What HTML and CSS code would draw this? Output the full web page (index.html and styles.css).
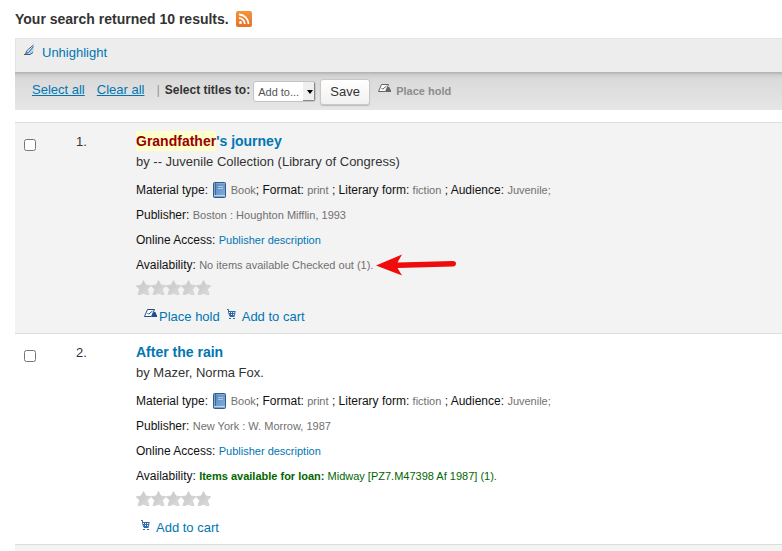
FILE: index.html
```html
<!DOCTYPE html>
<html lang="en">
<head>
<meta charset="utf-8">
<title>Search results</title>
<link rel="stylesheet" href="styles.css">
</head>
<body>
<svg class="defs" aria-hidden="true">
  <defs>
    <linearGradient id="bookFill" x1="0" y1="0" x2="1" y2="1"><stop offset="0" stop-color="#5585b8"/><stop offset="1" stop-color="#86b0da"/></linearGradient>
    <linearGradient id="starFill" x1="0" y1="0" x2="1" y2="1"><stop offset="0" stop-color="#c8c8c8"/><stop offset=".5" stop-color="#cfcfcf"/><stop offset="1" stop-color="#dedede"/></linearGradient>
    <linearGradient id="rssFill" x1="0" y1="0" x2="0" y2="1"><stop offset="0" stop-color="#f5943c"/><stop offset="1" stop-color="#e5702a"/></linearGradient>
    <symbol id="book" viewBox="0 0 13 16">
      <rect x=".5" y=".5" width="12" height="15" rx="1" fill="url(#bookFill)" stroke="#2f5b8d"/>
      <path d="M2.5 1v12" stroke="#3c6a9e"/><path d="M1.5 1v12M3.5 1.5h8" stroke="#8db4dc" opacity=".7"/>
      <path d="M5 4.5h5M5 6.5h5" stroke="#a9c9e8"/><path d="M1 13.5h11" stroke="#c3d6e9"/>
    </symbol>
    <symbol id="star" viewBox="0 0 15 15">
      <path d="M7.500 .5l2.300 4.500 5 .7-3.500 3.600 1.700 5.200h-2l-3.500-1.300L4 14.500H2l1.700-5.200L.2 5.700l5-.7z" fill="url(#starFill)" stroke="#d2d2d2" stroke-width="1" stroke-linejoin="round"/>
    </symbol>
    <symbol id="hold" viewBox="0 0 13 9">
      <path d="M3.500.5h7L7.500 7.500h-7z" fill="#fff" stroke="currentColor"/>
      <path d="M3.500 4l1.200 1.200L8.500 2" fill="none" stroke="currentColor"/>
      <path d="M10.500 3c2 0 1 2.500 2.500 3v2H8V6c1.500-.5.500-3 2.500-3z" fill="currentColor"/>
    </symbol>
    <symbol id="cart" viewBox="0 0 9 10">
      <path d="M0 .5h1.500v3L3 7.500h4.500M1.500 2.500h7M2 4.500h6M2.500 6.500h5M3.500 2v5M5.500 2v5M8 2.500l-.5 4" fill="none" stroke="#2d68a8"/>
      <path d="M2 9.500h2M6 9.500h2" stroke="#2d68a8"/>
    </symbol>
  </defs>
</svg>

<main class="results">
  <h1 class="summary">Your search returned 10 results.
    <a class="rss" href="#rss" aria-label="Subscribe to this search"><svg width="16" height="16" viewBox="0 0 16 16"><rect width="16" height="16" rx="2" fill="url(#rssFill)"/><circle cx="4.500" cy="11.500" r="1.500" fill="#fff"/><path d="M3 7.200a5.800 5.800 0 0 1 5.800 5.800M3 3.500A9.500 9.500 0 0 1 12.500 13" fill="none" stroke="#fff" stroke-width="1.800"/></svg></a>
  </h1>

  <div class="highlight-bar">
    <a class="highlight" href="#unhighlight"><svg width="14" height="13" viewBox="0 0 14 13"><path d="M0 8.500h4l2 2.500-5 .5z" fill="#f8f4b0"/><path d="M6 9l6.500-6v5l-2 2H5z" fill="#b9d3e2"/><path d="M12.500 1L6.500 6 4.500 9.500 7.500 8.500l5-6M3 10.500h6l3-2" fill="none" stroke="#2a5f9c"/></svg>Unhighlight</a>
  </div>

  <form class="toolbar">
    <a class="select-link" href="#all">Select all</a>
    <a class="select-link" href="#none">Clear all</a>
    <span class="divider">|</span>
    <label class="titles-label" for="addto">Select titles to:</label>
    <span class="select-box"><select id="addto"><option>Add to...</option></select></span>
    <button class="save" type="button">Save</button>
    <a class="bulk-hold" href="#hold"><svg width="13" height="9"><use href="#hold"/></svg>Place hold</a>
  </form>

  <table class="records">
    <tbody>
    <tr>
      <td class="pick"><input type="checkbox" aria-label="Select Grandfather's journey"></td>
      <td class="number">1.</td>
      <td class="record">
        <a class="title" href="#r1"><mark>Grandfather</mark>'s journey</a>
        <p class="author">by -- Juvenile Collection (Library of Congress)</p>
        <p class="detail">Material type: <svg class="book" width="13" height="16"><use href="#book"/></svg> <span class="value">Book</span>; Format: <span class="value">print</span> ; Literary form: <span class="value">fiction</span> ; Audience: <span class="value">Juvenile;</span></p>
        <p class="detail">Publisher: <span class="value">Boston : Houghton Mifflin, 1993</span></p>
        <p class="detail">Online Access: <a class="value" href="#d1">Publisher description</a></p>
        <p class="detail">Availability: <span class="value marked">No items available Checked out (1).<svg class="arrow" width="80" height="22" viewBox="0 0 80 22"><path d="M0 11.500L26 .5l-4.500 8L77 7q3 0 3 2.500T77 12.500L21.500 14l4.500 7.500z" fill="#ee0c0c"/></svg></span></p>
        <div class="stars" role="img" aria-label="Not rated"><svg width="15" height="15"><use href="#star"/></svg><svg width="15" height="15"><use href="#star"/></svg><svg width="15" height="15"><use href="#star"/></svg><svg width="15" height="15"><use href="#star"/></svg><svg width="15" height="15"><use href="#star"/></svg></div>
        <div class="actions">
          <a class="hold" href="#h1"><svg width="13" height="9"><use href="#hold"/></svg>Place hold</a>
          <a class="cart" href="#c1"><svg width="9" height="10"><use href="#cart"/></svg>Add to cart</a>
        </div>
      </td>
    </tr>
    <tr>
      <td class="pick"><input type="checkbox" aria-label="Select After the rain"></td>
      <td class="number">2.</td>
      <td class="record">
        <a class="title" href="#r2">After the rain</a>
        <p class="author">by Mazer, Norma Fox.</p>
        <p class="detail">Material type: <svg class="book" width="13" height="16"><use href="#book"/></svg> <span class="value">Book</span>; Format: <span class="value">print</span> ; Literary form: <span class="value">fiction</span> ; Audience: <span class="value">Juvenile;</span></p>
        <p class="detail">Publisher: <span class="value">New York : W. Morrow, 1987</span></p>
        <p class="detail">Online Access: <a class="value" href="#d2">Publisher description</a></p>
        <p class="detail">Availability: <span class="value available"><b>Items available for loan:</b> Midway [PZ7.M47398 Af 1987] (1).</span></p>
        <div class="stars" role="img" aria-label="Not rated"><svg width="15" height="15"><use href="#star"/></svg><svg width="15" height="15"><use href="#star"/></svg><svg width="15" height="15"><use href="#star"/></svg><svg width="15" height="15"><use href="#star"/></svg><svg width="15" height="15"><use href="#star"/></svg></div>
        <div class="actions">
          <a class="cart" href="#c2"><svg width="9" height="10"><use href="#cart"/></svg>Add to cart</a>
        </div>
      </td>
    </tr>
    <tr class="next"><td colspan="3"></td></tr>
    </tbody>
  </table>
</main>
</body>
</html>
```
FILE: styles.css
```css
* { box-sizing: border-box; }

body {
  margin: 0;
  background: #fff;
  color: #333;
  font: 13px/20px "Liberation Sans", Arial, sans-serif;
}

a { color: #0076b2; text-decoration: none; }
p { margin: 0; }

.defs { position: absolute; width: 0; height: 0; }

.results { padding: 9px 0 0 15px; }

.summary {
  display: flex;
  align-items: center;
  gap: 7px;
  margin: 0 0 9px;
  font-size: 14px;
  line-height: 20px;
}
.rss svg { display: block; }

.highlight-bar {
  padding: 4px 5px 9px;
  background: #ededed;
  border: solid #e4e4e4;
  border-width: 1px 0 0 1px;
}
.highlight { display: flex; gap: 7px; }
.highlight svg { margin-top: 1px; }

.toolbar {
  display: flex;
  align-items: center;
  height: 38px;
  margin: 0;
  padding: 0 0 2px 17px;
  background: linear-gradient(#b0b0b0, #cecece 3px, #dadada 7px, #e6e6e6);
}
.select-link { margin-right: 12px; text-decoration: underline; }
.divider { color: #999; margin-right: 5px; }
.titles-label { font-weight: bold; font-size: 12px; }

.select-box { position: relative; margin: 2px 0 0 3px; }
.select-box::after {
  content: "";
  position: absolute;
  top: 9px;
  right: 3px;
  border: 3px solid transparent;
  border-top: 4px solid #000;
  pointer-events: none;
}
.select-box select {
  display: block;
  appearance: none;
  width: 63px;
  height: 21px;
  padding: 1px 4px 0;
  border: 1px solid #c4c4c4;
  border-radius: 3px;
  background:
    linear-gradient(#888, #888) right / 1px 100% no-repeat,
    linear-gradient(#888, #888) right bottom / 12px 1px no-repeat,
    linear-gradient(90deg, #fff 49px, #efefef 49px);
  color: #555;
  font: 11px "Liberation Sans", Arial, sans-serif;
}
.save {
  width: 50px;
  height: 26px;
  margin: 3px 8px 0 4px;
  padding: 0;
  border: 1px solid #c8c8c8;
  border-radius: 3px;
  box-shadow: 0 1px 1px #bbb;
  background: linear-gradient(#fff, #f1f1f1);
  color: #333;
  font: 13px "Liberation Sans", Arial, sans-serif;
}
.bulk-hold {
  display: flex;
  gap: 5px;
  margin-top: 2px;
  color: #8c8c8c;
  font-size: 11px;
  font-weight: bold;
}
.bulk-hold svg { margin-top: 3px; color: #666; }

.records {
  width: 100%;
  margin-top: 12px;
  border-collapse: collapse;
}
.records td {
  padding: 0;
  border-top: 1px solid #dcdcdc;
  vertical-align: top;
}
.records tr:nth-child(odd) { background: #f3f3f3; }
.records .next td { height: 7px; }

.records .pick { width: 60px; padding: 16px 0 0 9px; }
.pick input { display: block; width: 12px; height: 12px; margin: 0; }
.records .number { width: 61px; padding: 9px 0 0 1px; }
.records .record { padding: 8px 0 6px; }

.title {
  display: block;
  font-size: 14px;
  font-weight: bold;
  line-height: 21px;
}
mark { padding: 2px 0; background: #ffffcc; color: #900; }
.author { margin-bottom: 6px; line-height: 20px; }
.detail {
  color: #111;
  font-size: 12px;
  line-height: 25px;
}
.value { color: #707070; font-size: 11px; }
a.value { color: #0076b2; }
.value.available { color: #060; }
.book { margin: 0 1px 0 2px; vertical-align: -4px; }

.marked { position: relative; }
.arrow { position: absolute; left: 100%; top: -5px; margin-left: 3px; }

.stars { display: flex; height: 18px; padding-top: 2px; }
.actions {
  display: flex;
  gap: 7px;
  margin-top: 11px;
  padding-left: 5px;
}
.actions a { display: flex; }
.hold { gap: 2px; margin-left: 3px; }
.hold svg { margin-top: 2px; color: #1d4d86; }
.cart { gap: 6px; }
.cart svg { margin-top: 2px; }
```
